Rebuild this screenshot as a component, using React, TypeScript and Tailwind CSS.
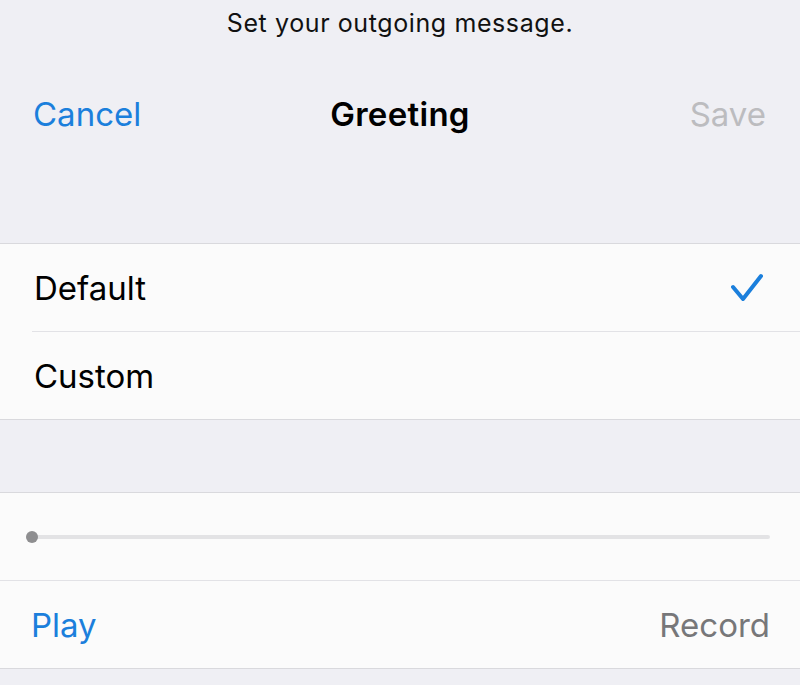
import type { ReactNode } from "react";

const font = { fontFamily: "Inter, 'Noto Sans', sans-serif" };

function Row({ children, inset }: { children: ReactNode; inset?: boolean }) {
  return (
    <div className="relative flex h-[87px] items-center justify-between pl-[34px] pr-[34px] pt-[3px]">
      {children}
      {inset && <span className="absolute bottom-[-1px] left-[32px] right-0 h-px bg-[#e2e2e6]" />}
    </div>
  );
}

export default function App() {
  return (
    <div className="h-[685px] w-[800px] overflow-hidden bg-[#efeff4] text-black" style={font}>
      <header className="h-[243px]">
        <div className="flex h-[48px] items-center justify-center text-[25px] tracking-[0.6px] text-[#111]">
          Set your outgoing message.
        </div>
        <div className="mt-[32px] grid h-[70px] grid-cols-[1fr_auto_1fr] items-center px-[33px] text-[33px]">
          <span className="text-[#1b7fdc]">Cancel</span>
          <span className="font-semibold tracking-[0.3px]">Greeting</span>
          <span className="justify-self-end pr-[1px] text-[#bcbcbf]">Save</span>
        </div>
      </header>

      <section className="border-y border-[#d9d9dd] bg-[#fbfbfb] text-[33px]">
        <Row inset>
          <span>Default</span>
          <svg width="36" height="34" viewBox="0 0 36 34" className="mr-[-1px]" aria-hidden>
            <path
              d="M2 15 L12 27 L30 4"
              fill="none"
              stroke="#1b7fdc"
              strokeWidth="4"
              strokeLinecap="round"
              strokeLinejoin="round"
            />
          </svg>
        </Row>
        <div className="h-px" />
        <Row>
          <span>Custom</span>
        </Row>
      </section>

      <div className="h-[72px]" />

      <section className="border-y border-[#d9d9dd] bg-[#fbfbfb] text-[33px]">
        <div className="flex h-[87px] items-center px-[26px]">
          <div className="relative flex h-[12px] flex-1 items-center pr-[4px]">
            <div className="h-[4px] flex-1 rounded-full bg-[#e3e3e5]" />
            <span className="absolute left-0 h-[12px] w-[12px] rounded-full bg-[#8e8e90]" />
          </div>
        </div>
        <div className="h-px bg-[#e2e2e6]" />
        <div className="flex h-[87px] items-center justify-between pl-[31px] pr-[30px] pt-[3px]">
          <span className="text-[#1b7fdc]">Play</span>
          <span className="text-[#777779]">Record</span>
        </div>
      </section>
    </div>
  );
}
